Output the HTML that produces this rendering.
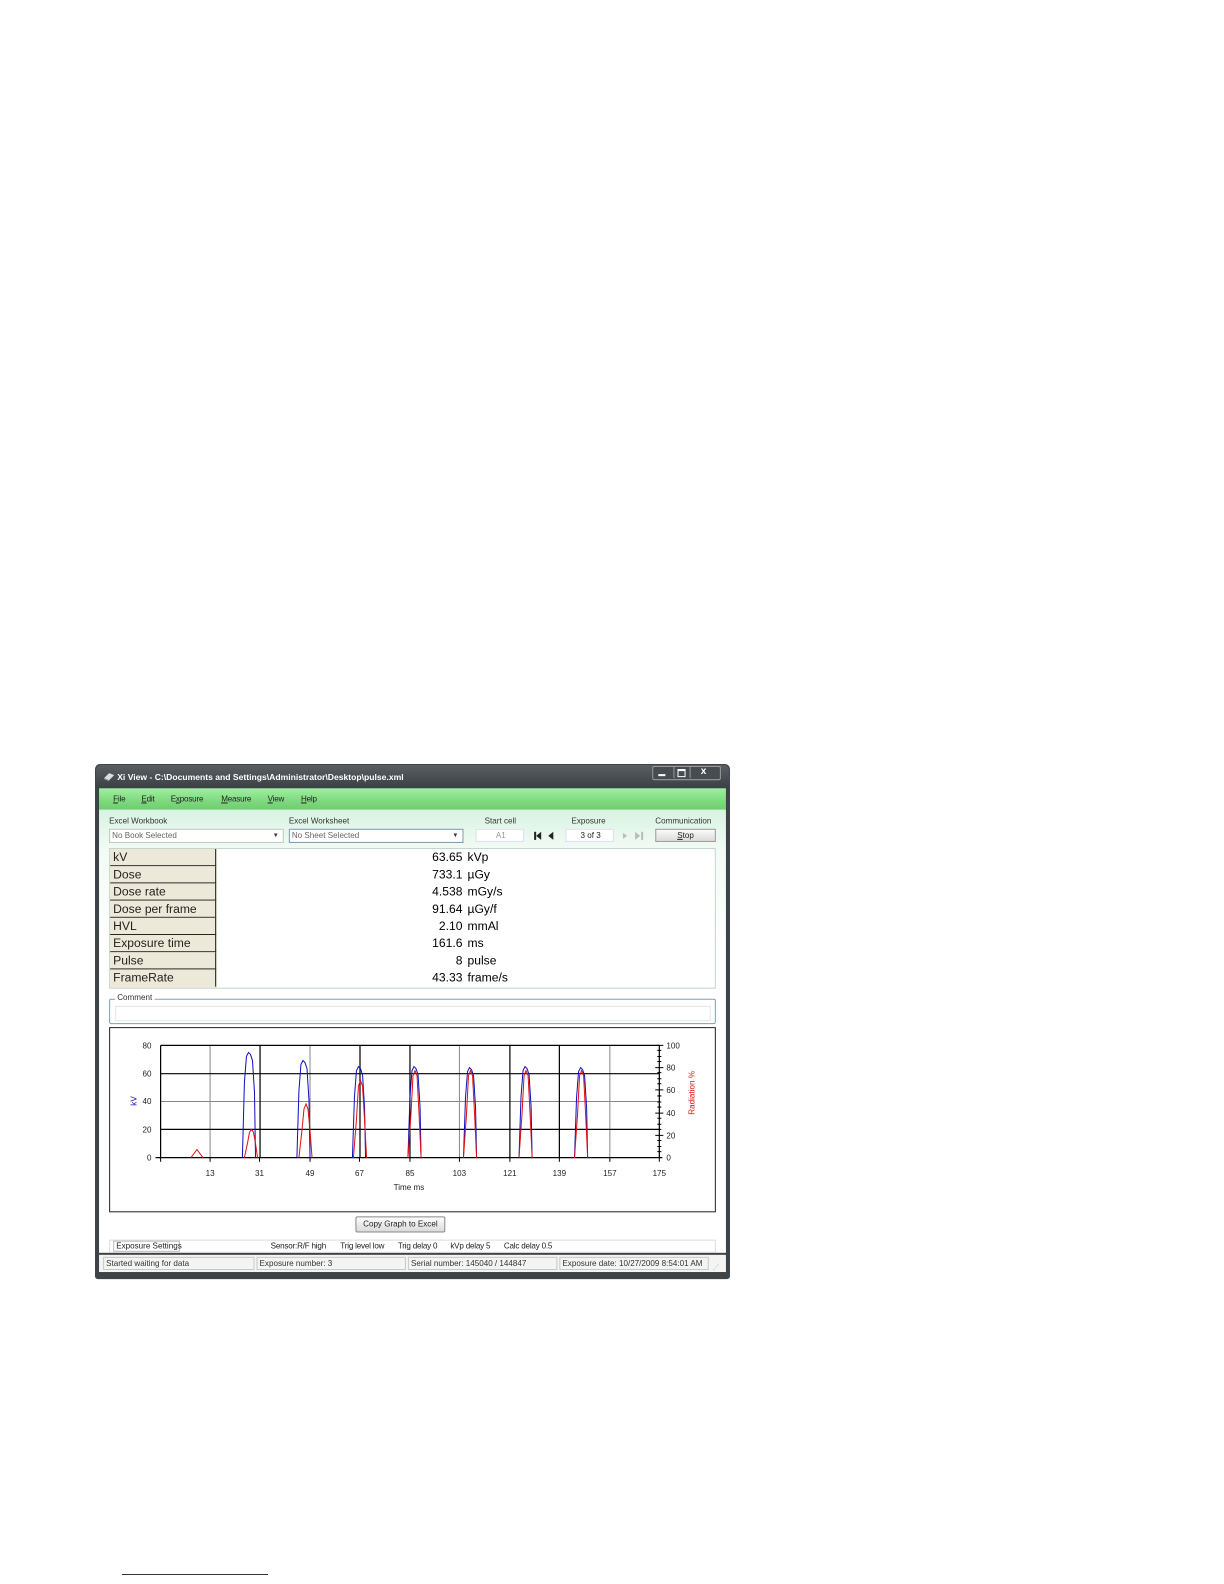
<!DOCTYPE html>
<html><head><meta charset="utf-8"><style>
html,body{margin:0;padding:0;background:#fff;}
body{width:1224px;height:1584px;position:relative;overflow:hidden;font-family:"Liberation Sans",sans-serif;}
#w{position:absolute;left:95px;top:764px;width:629px;height:509px;transform-origin:0 0;transform:scale(1.0095,1.012);}
.a{position:absolute;white-space:nowrap;}
.s{font-size:8px;color:#222;letter-spacing:-0.2px;}
.lbl{font-size:8px;color:#333;}
.box{position:absolute;background:#fff;border:1px solid #b9c9c0;font-size:8px;color:#666;line-height:12px;padding-left:2px;box-sizing:border-box;}
.row{position:absolute;left:0;width:105px;height:17px;border-bottom:1px solid #222;box-sizing:border-box;background:#ece9d8;font-size:12px;color:#222;line-height:16px;padding-left:3px;border-right:1px solid #222;}
.v{position:absolute;font-size:12px;color:#000;line-height:17px;}
.sp{position:absolute;top:487px;height:13px;border:1px solid #c8c8c8;box-sizing:border-box;font-size:8px;color:#333;line-height:11px;padding-left:2px;background:#f4f4f2;}
</style></head><body>
<div id="w">
 <div class="a" style="left:0;top:0;width:629px;height:509px;background:#3e4347;border-radius:5px 5px 3px 3px;"></div>
 <div class="a" style="left:1px;top:1px;width:627px;height:23px;background:linear-gradient(#5a5f63,#3b4044);border-radius:5px 5px 0 0;"></div>
 <svg class="a" style="left:8px;top:7px" width="12" height="11"><path d="M1 7 L6 2 L11 4 L6 9 Z" fill="#ddd"/><path d="M1 7 L6 9 L6 10 L1 8Z" fill="#999"/></svg>
 <div class="a" style="left:22px;top:8px;font-size:8.5px;font-weight:bold;color:#fff;">Xi View - C:\Documents and Settings\Administrator\Desktop\pulse.xml</div>
 <div class="a" style="left:552px;top:2px;width:66px;height:12px;border:1px solid #999;border-radius:2px;background:#474c50;"></div>
 <div class="a" style="left:573px;top:3px;width:1px;height:11px;background:#999;"></div>
 <div class="a" style="left:589px;top:3px;width:1px;height:11px;background:#999;"></div>
 <div class="a" style="left:558px;top:10px;width:7px;height:2px;background:#fff;"></div>
 <div class="a" style="left:577px;top:5px;width:6px;height:5px;border:1px solid #fff;border-top-width:2px;"></div>
 <div class="a" style="left:600px;top:2px;font-size:10px;font-weight:bold;color:#fff;">x</div>
 <div class="a" style="left:4px;top:24px;width:621px;height:21px;background:linear-gradient(#9ff09f,#7fd97f 60%,#6fcd6f);"></div>
 <div class="a s" style="left:18px;top:30px;"><u>F</u>ile</div>
 <div class="a s" style="left:46px;top:30px;"><u>E</u>dit</div>
 <div class="a s" style="left:75px;top:30px;">E<u>x</u>posure</div>
 <div class="a s" style="left:125px;top:30px;"><u>M</u>easure</div>
 <div class="a s" style="left:171px;top:30px;"><u>V</u>iew</div>
 <div class="a s" style="left:204px;top:30px;"><u>H</u>elp</div>
 <div class="a" style="left:4px;top:45px;width:621px;height:438px;background:linear-gradient(#d8f3e2,#f2fbf5 40px,#fff 140px);"></div>
 <div class="a lbl" style="left:14px;top:52px;">Excel Workbook</div>
 <div class="a lbl" style="left:192px;top:52px;">Excel Worksheet</div>
 <div class="a lbl" style="left:386px;top:52px;">Start cell</div>
 <div class="a lbl" style="left:472px;top:52px;">Exposure</div>
 <div class="a lbl" style="left:555px;top:52px;">Communication</div>
 <div class="box" style="left:14px;top:64px;width:173px;height:14px;">No Book Selected<span style="position:absolute;right:4px;top:0;font-size:6px;color:#333">▼</span></div>
 <div class="box" style="left:192px;top:64px;width:173px;height:14px;border-color:#7a9ab0;">No Sheet Selected<span style="position:absolute;right:4px;top:0;font-size:6px;color:#333">▼</span></div>
 <div class="box" style="left:377px;top:64px;width:48px;height:13px;text-align:center;color:#999;border-color:#dde;">A1</div>
 <svg class="a" style="left:434px;top:66px" width="24" height="10"><rect x="1" y="1" width="2" height="8" fill="#222"/><path d="M8 1 L3 5 L8 9Z" fill="#222"/><path d="M20 1 L15 5 L20 9Z" fill="#222"/></svg>
 <div class="box" style="left:466px;top:64px;width:48px;height:13px;text-align:center;color:#222;border-color:#dde;">3 of 3</div>
 <svg class="a" style="left:520px;top:66px" width="26" height="10"><path d="M3 2 L7 5 L3 8Z" fill="#bbb"/><path d="M15 1 L20 5 L15 9Z" fill="#bbb"/><rect x="21" y="1" width="2" height="8" fill="#bbb"/></svg>
 <div class="a" style="left:555px;top:64px;width:60px;height:13px;border:1px solid #999;box-sizing:border-box;background:linear-gradient(#fafafa,#dcdcdc);font-size:8px;text-align:center;line-height:11px;color:#222;"><u>S</u>top</div>
 <div class="a" style="left:14px;top:83px;width:601px;height:139px;background:#fff;border:1px solid #c5d5cc;box-sizing:border-box;">
  <div style="position:absolute;left:0;top:0;width:106px;height:137px;background:#ece9d8;"></div>
  <div class="row" style="top:0;">kV</div>
  <div class="row" style="top:17px;">Dose</div>
  <div class="row" style="top:34px;">Dose rate</div>
  <div class="row" style="top:51px;">Dose per frame</div>
  <div class="row" style="top:68px;">HVL</div>
  <div class="row" style="top:85px;">Exposure time</div>
  <div class="row" style="top:102px;">Pulse</div>
  <div class="row" style="top:119px;border-bottom:none;">FrameRate</div>
  <div class="v" style="right:250px;top:0;text-align:right;">63.65<br>733.1<br>4.538<br>91.64<br>2.10<br>161.6<br>8<br>43.33</div>
  <div class="v" style="left:354px;top:0;">kVp<br>µGy<br>mGy/s<br>µGy/f<br>mmAl<br>ms<br>pulse<br>frame/s</div>
 </div>
 <div class="a" style="left:14px;top:232px;width:601px;height:25px;border:1px solid #7fa0b0;border-radius:2px;box-sizing:border-box;"></div>
 <div class="a" style="left:20px;top:226px;background:#fff;padding:0 2px;font-size:8px;color:#333;">Comment</div>
 <div class="a" style="left:20px;top:239px;width:588px;height:13px;border:1px solid #e2e8e4;"></div>
 <div class="a" style="left:14px;top:260px;width:601px;height:183px;border:1px solid #222;box-sizing:border-box;background:#fff;"></div>
 <svg class="a" style="left:0;top:0" width="629" height="509" font-family="Liberation Sans, sans-serif" font-size="8">
  <g stroke="#888" stroke-width="1">
   <line x1="114" y1="278" x2="114" y2="389"/><line x1="213" y1="278" x2="213" y2="389"/><line x1="361" y1="278" x2="361" y2="389"/><line x1="510" y1="278" x2="510" y2="389"/>
   <line x1="65" y1="333.5" x2="559" y2="333.5"/>
  </g>
  <g stroke="#000" stroke-width="1.2">
   <line x1="163.5" y1="278" x2="163.5" y2="389"/><line x1="262.5" y1="278" x2="262.5" y2="389"/><line x1="312" y1="278" x2="312" y2="389"/><line x1="411" y1="278" x2="411" y2="389"/><line x1="460" y1="278" x2="460" y2="389"/>
   <line x1="65" y1="278" x2="559" y2="278"/><line x1="65" y1="306" x2="559" y2="306"/><line x1="65" y1="361" x2="559" y2="361"/>
   <line x1="65" y1="278" x2="65" y2="389"/><line x1="60" y1="389" x2="562" y2="389"/><line x1="559" y1="278" x2="559" y2="389"/>
  </g>
  <g stroke="#000" stroke-width="1">
   <path d="M555 278h8M555 300h8M555 322h8M555 345h8M555 367h8M557 283h4M557 289h4M557 294h4M557 305h4M557 311h4M557 316h4M557 328h4M557 334h4M557 339h4M557 350h4M557 356h4M557 361h4M557 372h4M557 378h4M557 383h4"/>
   <path d="M114 389v4M163 389v4M213 389v4M262 389v4M312 389v4M361 389v4M411 389v4M460 389v4M510 389v4M559 389v4M65 389v4"/>
  </g>
  <g fill="none" stroke="#1010c0" stroke-width="1">
   <path d="M146 389 L148 315 L150 289 L152 285 L154 287 L156 293 L158 325 L159 389"/>
   <path d="M200 389 L202 323 L204 297 L206 293 L208 295 L210 301 L212 333 L213 389"/>
   <path d="M255 389 L257 329 L259 303 L261 299 L263 301 L265 307 L267 339 L268 389"/>
   <path d="M310 389 L312 329 L314 303 L316 299 L318 301 L320 307 L322 339 L323 389"/>
   <path d="M365 389 L367 330 L369 304 L371 300 L373 302 L375 308 L377 340 L378 389"/>
   <path d="M420 389 L422 329 L424 303 L426 299 L428 301 L430 307 L432 339 L433 389"/>
   <path d="M475 389 L477 330 L479 304 L481 300 L483 302 L485 308 L487 340 L488 389"/>
  </g>
  <g fill="none" stroke="#e01010" stroke-width="1">
   <path d="M95 389 L98 385 L101 381 L104 385 L107 389"/>
   <path d="M148 389 L151 375 L153 364 L155 361 L157 364 L159 375 L161 389"/>
   <path d="M202 389 L205 362 L207 341 L209 336 L211 341 L213 362 L215 389"/>
   <path d="M256 389 L259 351 L261 318 L263 313 L265 318 L267 351 L269 389"/>
   <path d="M310 389 L313 346 L315 308 L317 303 L319 308 L321 346 L323 389"/>
   <path d="M365 389 L368 346 L370 308 L372 303 L374 308 L376 346 L378 389"/>
   <path d="M420 389 L423 346 L425 308 L427 303 L429 308 L431 346 L433 389"/>
   <path d="M475 389 L478 346 L480 308 L482 303 L484 308 L486 346 L488 389"/>
  </g>
  <g fill="#222" text-anchor="end">
   <text x="56" y="281">80</text><text x="56" y="309">60</text><text x="56" y="336">40</text><text x="56" y="364">20</text><text x="56" y="392">0</text>
  </g>
  <g fill="#222">
   <text x="566" y="281">100</text><text x="566" y="303">80</text><text x="566" y="325">60</text><text x="566" y="348">40</text><text x="566" y="370">20</text><text x="566" y="392">0</text>
  </g>
  <g fill="#222" text-anchor="middle">
   <text x="114" y="407">13</text><text x="163" y="407">31</text><text x="213" y="407">49</text><text x="262" y="407">67</text><text x="312" y="407">85</text><text x="361" y="407">103</text><text x="411" y="407">121</text><text x="460" y="407">139</text><text x="510" y="407">157</text><text x="559" y="407">175</text>
   <text x="311" y="421">Time ms</text>
  </g>
  <text x="0" y="0" fill="#1010c0" text-anchor="middle" transform="translate(41,333) rotate(-90)">kV</text>
  <text x="0" y="0" fill="#e01010" text-anchor="middle" transform="translate(594,325) rotate(-90)">Radiation %</text>
 </svg>
 <div class="a" style="left:258px;top:447px;width:89px;height:16px;border:1px solid #888;border-radius:2px;box-sizing:border-box;background:linear-gradient(#fdfdfd,#dadada);font-size:8px;text-align:center;line-height:14px;color:#222;">Copy Graph to Excel</div>
 <div class="a" style="left:14px;top:470px;width:601px;height:13px;border:1px solid #ddd;box-sizing:border-box;"></div>
 <div class="a" style="left:18px;top:471px;width:66px;height:11px;border:1px solid #bbb;box-sizing:border-box;font-size:8px;line-height:9px;padding-left:2px;color:#222;">Exposure Settings</div>
 <div class="a s" style="left:174px;top:472px;">Sensor:R/F high</div>
 <div class="a s" style="left:243px;top:472px;">Trig level low</div>
 <div class="a s" style="left:300px;top:472px;">Trig delay 0</div>
 <div class="a s" style="left:352px;top:472px;">kVp delay 5</div>
 <div class="a s" style="left:405px;top:472px;">Calc delay 0.5</div>
 <div class="a" style="left:4px;top:485px;width:621px;height:17px;background:#f4f4f2;"></div>
 <div class="sp" style="left:8px;width:150px;">Started waiting for data</div>
 <div class="sp" style="left:160px;width:148px;">Exposure number: 3</div>
 <div class="sp" style="left:310px;width:148px;">Serial number: 145040 / 144847</div>
 <div class="sp" style="left:460px;width:148px;">Exposure date: 10/27/2009 8:54:01 AM</div>
 <div class="a" style="left:612px;top:494px;font-size:6px;color:#999;">⋰</div>
</div>
<div class="a" style="left:122px;top:1574px;width:146px;height:1px;background:#334;"></div>
</body></html>
